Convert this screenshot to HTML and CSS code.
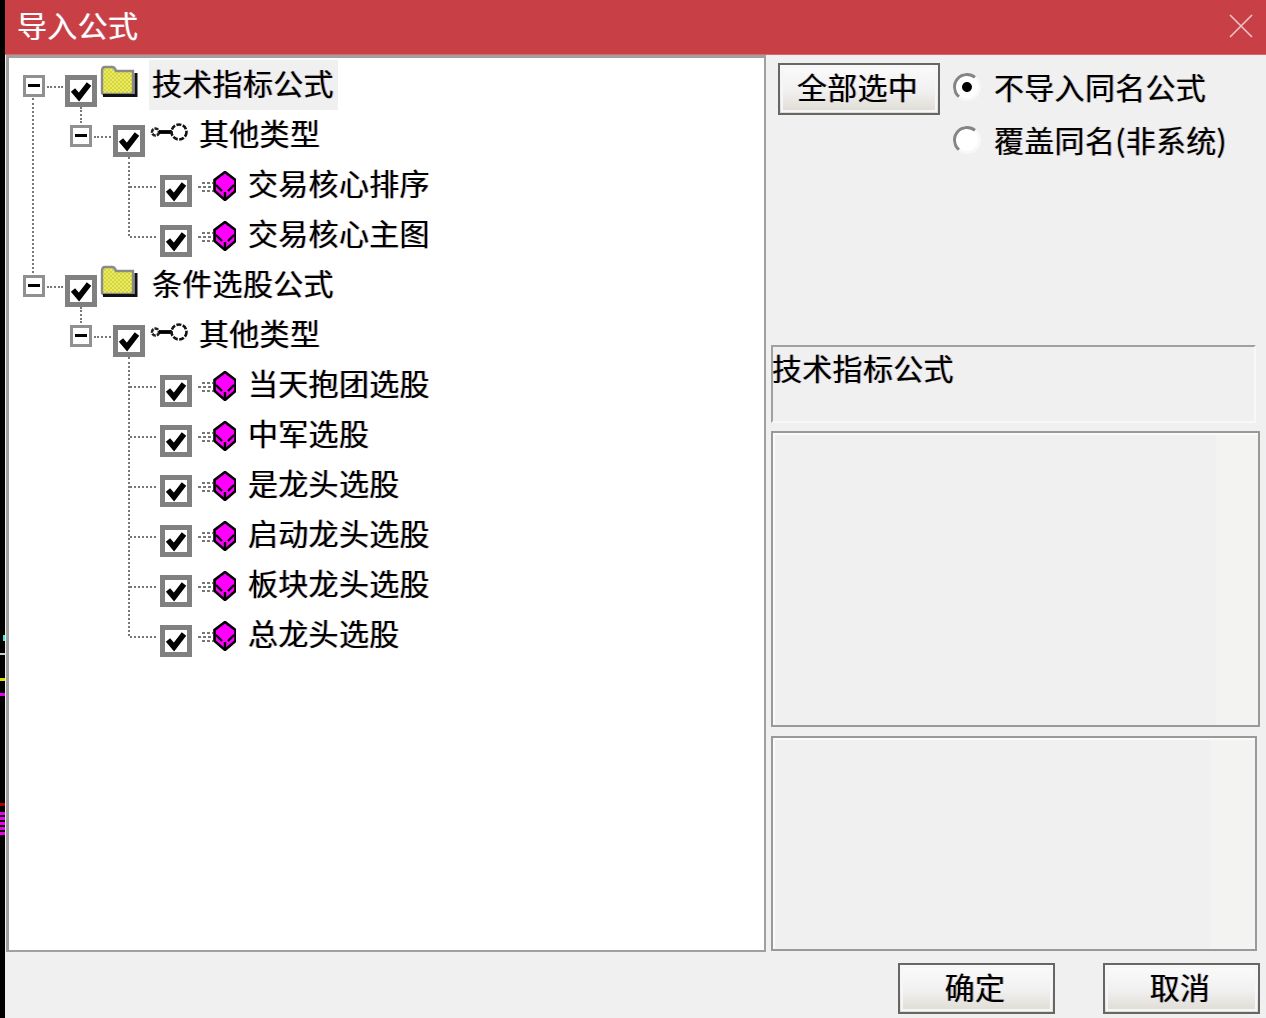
FILE: index.html
```html
<!DOCTYPE html>
<html lang="zh-CN">
<head>
<meta charset="utf-8">
<title>导入公式</title>
<link rel="stylesheet" href="styles.css">
</head>
<body>
<svg class="defs" width="0" height="0" aria-hidden="true">
  <defs>
    <pattern id="dots" width="4" height="4" patternUnits="userSpaceOnUse">
      <rect width="4" height="4" fill="#f8f800"/>
      <rect width="2" height="2" fill="#c8c8a0"/>
      <rect x="2" y="2" width="2" height="2" fill="#c8c8a0"/>
    </pattern>
    <symbol id="i-check" viewBox="0 0 22 22">
      <path d="M3 10 L9 17 L19 4" fill="none" stroke="#000" stroke-width="5.600"/>
    </symbol>
    <symbol id="i-folder" viewBox="0 0 38 33">
      <path d="M2 28 V6 Q2 2 5 2 H12 Q15 2 16 6 H33 V29 H3 Z" fill="url(#dots)" stroke="#8a8a8a" stroke-width="2.400"/>
      <path d="M3 30.500 H36 V8" fill="none" stroke="#111" stroke-width="3"/>
    </symbol>
    <symbol id="i-key" viewBox="0 0 38 20">
      <circle cx="5.500" cy="10" r="3.500" fill="#fff" stroke="#222" stroke-width="2.600" stroke-dasharray="4 1"/>
      <path d="M9 10 H22" stroke="#000" stroke-width="3.800"/>
      <circle cx="29" cy="10" r="7.500" fill="#fff" stroke="#111" stroke-width="2.600" stroke-dasharray="5 1.500"/>
    </symbol>
    <symbol id="i-cube" viewBox="0 0 38 30">
      <g stroke="#777" stroke-width="2" stroke-dasharray="3 2" fill="none">
        <path d="M4 12 H15"/><path d="M0 16 H15"/><path d="M4 20 H15"/>
      </g>
      <path d="M27 1 L37.500 9 V20 L27 29 L16.500 20 V9 Z" fill="#ff00ff" stroke="#000" stroke-width="2.600"/>
      <path d="M18 14 L24 20 M36 14 L30 20 M27 21 V28" fill="none" stroke="#000" stroke-width="2.400"/>
    </symbol>
  </defs>
</svg>
<div class="screen">
  <div class="backdrop"></div>
  <div class="dialog">
    <header class="titlebar">
      <span class="title">导入公式</span>
      <svg class="close" viewBox="0 0 24 24" aria-label="关闭"><path d="M1 1 L23 23 M23 1 L1 23" stroke="#ecc6c8" stroke-width="1.600" fill="none"/></svg>
    </header>
    <main class="body">
      <section class="tree-panel">
        <ul class="tree">
          <li class="root">
            <div class="row lv0"><i class="exp"></i><i class="stub"></i><i class="cb"><svg><use href="#i-check"/></svg></i><svg class="ic-folder"><use href="#i-folder"/></svg><span class="label selected">技术指标公式</span></div>
            <ul class="branch">
              <li>
                <div class="row lv1"><i class="exp"></i><i class="stub"></i><i class="cb"><svg><use href="#i-check"/></svg></i><svg class="ic-key"><use href="#i-key"/></svg><span class="label">其他类型</span></div>
                <ul class="leaves">
                  <li class="row lv2"><i class="stub"></i><i class="cb"><svg><use href="#i-check"/></svg></i><svg class="ic-cube"><use href="#i-cube"/></svg><span class="label">交易核心排序</span></li>
                  <li class="row lv2"><i class="stub"></i><i class="cb"><svg><use href="#i-check"/></svg></i><svg class="ic-cube"><use href="#i-cube"/></svg><span class="label">交易核心主图</span></li>
                </ul>
              </li>
            </ul>
          </li>
          <li class="root">
            <div class="row lv0"><i class="exp"></i><i class="stub"></i><i class="cb"><svg><use href="#i-check"/></svg></i><svg class="ic-folder"><use href="#i-folder"/></svg><span class="label plain">条件选股公式</span></div>
            <ul class="branch">
              <li>
                <div class="row lv1"><i class="exp"></i><i class="stub"></i><i class="cb"><svg><use href="#i-check"/></svg></i><svg class="ic-key"><use href="#i-key"/></svg><span class="label">其他类型</span></div>
                <ul class="leaves">
                  <li class="row lv2"><i class="stub"></i><i class="cb"><svg><use href="#i-check"/></svg></i><svg class="ic-cube"><use href="#i-cube"/></svg><span class="label">当天抱团选股</span></li>
                  <li class="row lv2"><i class="stub"></i><i class="cb"><svg><use href="#i-check"/></svg></i><svg class="ic-cube"><use href="#i-cube"/></svg><span class="label">中军选股</span></li>
                  <li class="row lv2"><i class="stub"></i><i class="cb"><svg><use href="#i-check"/></svg></i><svg class="ic-cube"><use href="#i-cube"/></svg><span class="label">是龙头选股</span></li>
                  <li class="row lv2"><i class="stub"></i><i class="cb"><svg><use href="#i-check"/></svg></i><svg class="ic-cube"><use href="#i-cube"/></svg><span class="label">启动龙头选股</span></li>
                  <li class="row lv2"><i class="stub"></i><i class="cb"><svg><use href="#i-check"/></svg></i><svg class="ic-cube"><use href="#i-cube"/></svg><span class="label">板块龙头选股</span></li>
                  <li class="row lv2"><i class="stub"></i><i class="cb"><svg><use href="#i-check"/></svg></i><svg class="ic-cube"><use href="#i-cube"/></svg><span class="label">总龙头选股</span></li>
                </ul>
              </li>
            </ul>
          </li>
        </ul>
      </section>
      <aside class="side">
        <div class="side-top">
          <button class="btn btn-all" type="button">全部选中</button>
          <div class="radios">
            <div class="radio-row"><i class="radio on"></i><span>不导入同名公式</span></div>
            <div class="radio-row second"><i class="radio"></i><span>覆盖同名(非系统)</span></div>
          </div>
        </div>
        <div class="caption">技术指标公式</div>
        <div class="box box-mid"></div>
        <div class="box box-low"></div>
      </aside>
    </main>
    <footer class="footer">
      <button class="btn btn-foot" type="button">确定</button>
      <button class="btn btn-foot" type="button">取消</button>
    </footer>
  </div>
</div>
</body>
</html>
```
FILE: styles.css
```css
* { box-sizing: border-box; }
html, body { margin: 0; padding: 0; height: 100%; background: #000; overflow: hidden; }
.defs { position: absolute; }
ul { list-style: none; margin: 0; padding: 0; }
i { display: block; font-style: normal; }

.screen {
  display: flex;
  width: 1266px;
  height: 1018px;
  font-family: "Noto Sans CJK SC", "Noto Sans", sans-serif;
  font-size: 30px;
  letter-spacing: 0.3px;
  color: #000;
  filter: blur(0.7px);
}
.backdrop {
  flex: 0 0 5px;
  background:
    linear-gradient(#3ee, #3ee) 3px 635px / 2px 6px no-repeat,
    linear-gradient(#ccc, #ccc) 0 653px / 5px 2px no-repeat,
    linear-gradient(#dd0, #dd0) 0 678px / 5px 3px no-repeat,
    linear-gradient(#e0e, #e0e) 0 693px / 5px 3px no-repeat,
    linear-gradient(#a00, #a00) 0 803px / 5px 3px no-repeat,
    repeating-linear-gradient(#e0e 0 3px, #000 3px 5px) 0 812px / 5px 25px no-repeat,
    #000;
}
.dialog {
  flex: 1;
  display: flex;
  flex-direction: column;
  background: #f0f0f0;
  text-shadow: -1px 0 rgba(240, 130, 0, .5), 1px 0 rgba(0, 90, 240, .5);
}

.titlebar {
  flex: 0 0 55px;
  display: flex;
  align-items: center;
  justify-content: space-between;
  padding: 0 13px 6px 12px;
  background: #c84045;
  border-bottom: 1px solid #d46a6e;
}
.title { color: #fff; line-height: 48px; text-shadow: -0.8px 0 rgba(255, 190, 120, .5), 0.8px 0 rgba(190, 170, 255, .6); }
.close { width: 24px; height: 24px; margin-top: 4px; }

.body { flex: 0 0 897px; display: flex; }
.tree-panel {
  flex: 0 0 760px;
  margin-left: 1px;
  padding-top: 2px;
  background: #fff;
  border: 3px solid #a0a0a0;
  border-right-width: 2px;
  border-bottom-width: 2px;
}
.tree { position: relative; }

.row { display: flex; align-items: flex-start; height: 50px; }
.lv0 { padding-left: 14px; }
.lv1 { padding-left: 61px; }
.lv2 { padding-left: 121px; }

.exp {
  position: relative;
  flex: 0 0 22px;
  height: 22px;
  margin-top: 15px;
  background: #fff;
  border: 3px solid #909090;
}
.exp::after {
  content: "";
  position: absolute;
  left: 2px;
  right: 2px;
  top: 6px;
  height: 3px;
  background: #000;
}
.stub { height: 0; margin-top: 26px; border-top: 2px dotted #777; }
.lv0 .stub { flex: 0 0 16px; margin-left: 2px; margin-right: 2px; }
.lv1 .stub { flex: 0 0 17px; margin-left: 2px; margin-right: 2px; }
.lv2 .stub { flex: 0 0 26px; margin-right: 4px; }

.cb {
  flex: 0 0 32px;
  height: 32px;
  margin-top: 15px;
  background: #fff;
  border: 5px solid #808080;
}
.cb svg { display: block; width: 22px; height: 22px; }

.ic-folder { flex: 0 0 38px; width: 38px; height: 33px; margin: 5px 0 0 3px; }
.ic-key { flex: 0 0 38px; width: 38px; height: 20px; margin: 12px 0 0 5px; }
.ic-cube { flex: 0 0 38px; width: 38px; height: 30px; margin: 11px 0 0 6px; }

.label { height: 50px; line-height: 44px; white-space: nowrap; }
.lv0 .label { margin-left: 11px; padding: 0 4px 0 3px; }
.lv1 .label { margin-left: 11px; }
.lv2 .label { margin-left: 12px; }
.label.selected { background: #f0f0f0; }

.root { position: relative; }
.branch, .leaves { position: relative; }
.root:first-child::before {
  content: "";
  position: absolute;
  left: 23px;
  top: 38px;
  bottom: -13px;
  border-left: 2px dotted #777;
}
.branch::before {
  content: "";
  position: absolute;
  left: 71px;
  top: -3px;
  height: 16px;
  border-left: 2px dotted #777;
}
.leaves::before {
  content: "";
  position: absolute;
  left: 119px;
  top: -3px;
  bottom: 24px;
  border-left: 2px dotted #777;
}

.side { flex: 1; display: flex; flex-direction: column; padding-left: 5px; }
.side-top { flex: 0 0 290px; display: flex; align-items: flex-start; padding: 8px 0 0 7px; }

.btn {
  font: inherit;
  letter-spacing: inherit;
  color: inherit;
  text-shadow: inherit;
  padding: 0 3px 6px 0;
  border: 2px solid #666;
  outline: 2px solid #f6f6f6;
  outline-offset: -5px;
  background: linear-gradient(#fbfbfb, #f0f0f0 55%, #dedbd2);
}
.btn-all { flex: 0 0 162px; height: 52px; line-height: 40px; }

.radios { margin: -1px 0 0 13px; }
.radio-row { display: flex; align-items: center; height: 53px; gap: 14px; white-space: nowrap; }
.radio-row span { margin-top: -6px; margin-left: -1px; }
.radio {
  display: flex;
  align-items: center;
  justify-content: center;
  flex: 0 0 28px;
  height: 28px;
  margin-top: -3px;
  background: #fff;
  border: 3px solid #858585;
  border-right-color: #f8f8f8;
  border-bottom-color: #f8f8f8;
  border-radius: 50%;
  transform: rotate(-5deg);
}
.radio.on::after {
  content: "";
  width: 10px;
  height: 10px;
  background: #000;
  border-radius: 50%;
}

.caption {
  flex: 0 0 78px;
  width: 485px;
  line-height: 40px;
  text-indent: -1px;
  border: 2px solid #a0a0a0;
  border-right-color: #f8f8f8;
  border-bottom-color: #f8f8f8;
}
.box {
  border: 2px solid #999;
  box-shadow: inset 2px 2px 0 #fafafa;
}
.box-mid {
  flex: 0 0 296px;
  width: 489px;
  margin-top: 8px;
  background: linear-gradient(90deg, #f0f0f0 443px, #f3f3f1 443px);
}
.box-low {
  flex: 0 0 215px;
  width: 486px;
  margin-top: 9px;
  background: linear-gradient(90deg, #f0f0f0 437px, #f3f3f1 437px);
}

.footer { flex: 1; display: flex; justify-content: flex-end; gap: 48px; padding: 11px 6px 0 0; }
.btn-foot { width: 157px; height: 51px; line-height: 40px; }
```
